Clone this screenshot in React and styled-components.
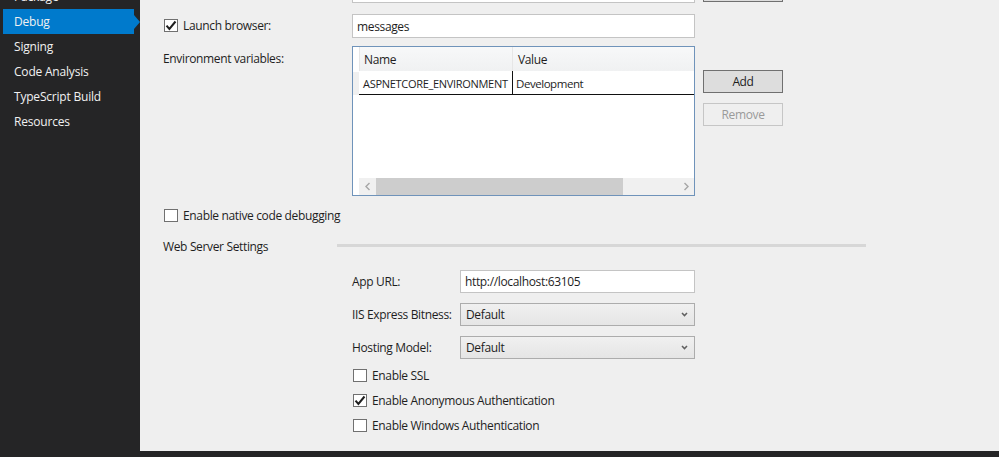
import React from "react";
import styled, { createGlobalStyle } from "styled-components";

const Global = createGlobalStyle`
  html, body { margin: 0; padding: 0; height: 100%; overflow: hidden; background: #efefef; }
  body { font-family: "Open Sans", "Noto Sans", "Liberation Sans", sans-serif; font-size: 12px; letter-spacing: -0.35px; color: #1e1e1e; }
`;
const Shell = styled.div`display: flex; flex-direction: column; width: 999px; height: 457px; overflow: hidden;`;
const Main = styled.div`display: flex; height: 451px; flex: none; overflow: hidden;`;
const StatusBar = styled.div`height: 6px; flex: none; background: #252526;`;
const Sidebar = styled.nav`width: 140px; flex: none; background: #252526; margin-top: -16px; height: 467px; box-sizing: border-box;`;
const NavItem = styled.div`
  position: relative; height: 25px; margin-left: 3px; width: 131px; padding: 0 0 0 11px; box-sizing: border-box;
  display: flex; align-items: center; color: #f1f1f1; letter-spacing: -0.2px;
  background: ${p => p.$active ? "#007acc" : "transparent"};
  ${p => p.$active ? `&::after { content: ""; position: absolute; left: 131px; top: 6px; border-left: 6px solid #007acc; border-top: 7px solid transparent; border-bottom: 7px solid transparent; }` : ""}
`;
const Content = styled.main`flex: 1; padding: 0 0 0 23px; margin-top: -21px; min-width: 0;`;
const FormGrid = styled.div`display: grid; grid-template-columns: 189px 343px 88px 1fr;`;
const Label = styled.div`
  display: flex; align-items: ${p => p.$top ? "flex-start" : "center"};
  padding-top: ${p => p.$pt || 0}px; padding-bottom: 1px;
`;
const Input = styled.div`
  height: ${p => p.$h || 23}px; box-sizing: border-box; background: #fff; border: 1px solid #c4c4c4;
  display: flex; align-items: center; padding: 0 0 0 4px; color: #1e1e1e; margin-top: ${p => p.$mt || 0}px;
`;
const Row = styled.div`display: contents;`;
const ButtonCol = styled.div`display: flex; flex-direction: column; gap: 10px; margin-left: 8px; width: 80px; padding-top: ${p => p.$pt || 0}px;`;
const Button = styled.div`
  height: 23px; box-sizing: border-box; width: 80px; display: flex; align-items: center; justify-content: center; padding-bottom: 1px;
  background: ${p => p.$disabled ? "#efefef" : "#dddddd"}; border: 1px solid ${p => p.$disabled ? "#c6c6c6" : "#707070"}; color: ${p => p.$disabled ? "#9a9a9a" : "#1e1e1e"};
`;
const Check = styled.div`display: flex; align-items: center; gap: 5px; height: 13px; margin-left: 1px;`;
const Box = styled.span`width: 14px; height: 13px; box-sizing: border-box; border: 1px solid #707070; background: #fff; display: inline-flex; align-items: center; justify-content: center; flex: none;`;
const Table = styled.div`height: 150px; box-sizing: border-box; border: 1px solid #6f93ba; background: #fff; display: flex; flex-direction: column; margin-top: 8px;`;
const HeadRow = styled.div`display: grid; grid-template-columns: 7px 153px 1fr; height: 24px; flex: none;`;
const HeadCorner = styled.div`background: #fff;`;
const HeadCell = styled.div`
  display: flex; align-items: center; padding-left: ${p => p.$pl}px; border-left: 1px solid #e6e6e6; margin-left: -1px;
  background: linear-gradient(#f7f8f9, #f0f1f2);
`;
const BodyRow = styled.div`display: grid; grid-template-columns: 6px 154px 1fr; height: 24px; flex: none;`;
const RowHead = styled.div`background: #f0f0f0; margin-top: 1px;`;
const Cell = styled.div`
  display: flex; align-items: center; border-bottom: 1px solid #111; font-size: ${p => p.$fs}px; letter-spacing: ${p => p.$ls}px;
  padding: 1px 0 0 ${p => p.$pl}px; ${p => p.$sep ? "border-right: 1px solid #111;" : ""} white-space: nowrap;
`;
const Spacer = styled.div`flex: 1;`;
const Scrollbar = styled.div`display: flex; height: 17px; margin-left: 6px; background: #f0f0f0; flex: none;`;
const ScrollBtn = styled.div`width: 17px; flex: none; display: flex; align-items: center; justify-content: center;`;
const Thumb = styled.div`width: 247px; flex: none; background: #cdcdcd;`;
const Track = styled.div`flex: 1;`;
const CheckRow = styled.div`grid-column: 1 / -1; margin-top: ${p => p.$mt}px;`;
const SectionRow = styled.div`grid-column: 1 / -1; display: flex; align-items: center; height: 16px; margin-top: 16px;`;
const SectionText = styled.div`width: 174px; flex: none;`;
const SectionLine = styled.div`width: 529px; height: 3px; background: #d7d7d7; margin-top: -2px;`;
const Server = styled.div`margin-left: 189px; width: 343px; margin-top: 16px; display: flex; flex-direction: column;`;
const ServerRow = styled.div`display: grid; grid-template-columns: 108px 235px; margin-bottom: 10px;`;
const Select = styled.div`
  height: 23px; box-sizing: border-box; border: 1px solid #acacac; background: linear-gradient(#f0f0f0, #e5e5e5);
  display: flex; align-items: center; justify-content: space-between; padding: 0 6px 1px 5px;
`;
const Checks = styled.div`display: flex; flex-direction: column; gap: 12px;`;

const Tick = () => (
  <svg width="12" height="11" viewBox="0 0 12 11"><path d="M1.5 5.6 L4.4 9 L10.5 1.5" fill="none" stroke="#1e1e1e" strokeWidth="2" /></svg>
);
const Chev = () => (
  <svg width="7" height="5" viewBox="0 0 7 5"><path d="M1 1 L3.5 3.6 L6 1" fill="none" stroke="#606060" strokeWidth="1.5" /></svg>
);
const Arrow = ({ d }) => (
  <svg width="6" height="9" viewBox="0 0 6 9"><path d={d} fill="none" stroke="#a6a6a6" strokeWidth="1.4" /></svg>
);

export default function App() {
  return (
    <>
      <Global />
      <Shell>
        <Main>
          <Sidebar>
            <NavItem>Package</NavItem>
            <NavItem $active>Debug</NavItem>
            <NavItem>Signing</NavItem>
            <NavItem>Code Analysis</NavItem>
            <NavItem>TypeScript Build</NavItem>
            <NavItem>Resources</NavItem>
          </Sidebar>
          <Content>
            <FormGrid>
              <Row>
                <Label />
                <Input $h={24} />
                <ButtonCol><Button /></ButtonCol>
                <div />
              </Row>
              <Row>
                <Label $pt={11}><Check><Box><Tick /></Box>Launch browser:</Check></Label>
                <Input $h={24} $mt={11}>messages</Input>
                <div />
                <div />
              </Row>
              <Row>
                <Label $top $pt={12}>Environment variables:</Label>
                <Table>
                  <HeadRow>
                    <HeadCorner />
                    <HeadCell $pl={4}>Name</HeadCell>
                    <HeadCell $pl={5}>Value</HeadCell>
                  </HeadRow>
                  <BodyRow>
                    <RowHead />
                    <Cell $pl={4} $sep $fs={11} $ls={-0.3}>ASPNETCORE_ENVIRONMENT</Cell>
                    <Cell $pl={3} $fs={11.5} $ls={-0.45}>Development</Cell>
                  </BodyRow>
                  <Spacer />
                  <Scrollbar>
                    <ScrollBtn><Arrow d="M4.5 1 L1 4.5 L4.5 8" /></ScrollBtn>
                    <Thumb />
                    <Track />
                    <ScrollBtn><Arrow d="M1.5 1 L5 4.5 L1.5 8" /></ScrollBtn>
                  </Scrollbar>
                </Table>
                <ButtonCol $pt={32}>
                  <Button>Add</Button>
                  <Button $disabled>Remove</Button>
                </ButtonCol>
                <div />
              </Row>
              <CheckRow $mt={13}><Check><Box />Enable native code debugging</Check></CheckRow>
              <SectionRow><SectionText>Web Server Settings</SectionText><SectionLine /></SectionRow>
            </FormGrid>
            <Server>
              <ServerRow><Label>App URL:</Label><Input>http://localhost:63105</Input></ServerRow>
              <ServerRow><Label>IIS Express Bitness:</Label><Select>Default<Chev /></Select></ServerRow>
              <ServerRow><Label>Hosting Model:</Label><Select>Default<Chev /></Select></ServerRow>
              <Checks>
                <Check><Box />Enable SSL</Check>
                <Check><Box><Tick /></Box>Enable Anonymous Authentication</Check>
                <Check><Box />Enable Windows Authentication</Check>
              </Checks>
            </Server>
          </Content>
        </Main>
        <StatusBar />
      </Shell>
    </>
  );
}
